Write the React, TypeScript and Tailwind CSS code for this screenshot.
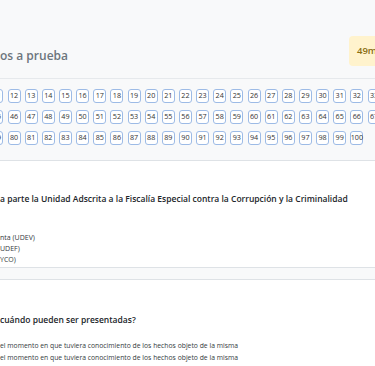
import type { ReactElement } from 'react';

const numbers = Array.from({ length: 100 }, (_, i) => i + 1);

function NumberBox({ n }: { n: number }): ReactElement {
  return (
    <span className="flex h-[14px] w-[13px] shrink-0 items-center justify-center rounded-[3px] border border-[#9dbbe6] bg-white text-[7.2px] leading-none text-[#333]">
      {n}
    </span>
  );
}

export default function App(): ReactElement {
  return (
    <div className="h-[366px] w-[375px] overflow-hidden bg-[#f8f9fa] font-['Open_Sans',sans-serif]">
      {/* header */}
      <div className="flex h-[79px] items-start justify-between border-b border-[#e6e9ec] pt-[36px]">
        <h1 className="mt-[5px] flex h-[30px] items-center text-[12px] font-semibold text-[#6c757d]">os a prueba</h1>
        <div className="-mr-[20px] flex h-[30px] w-[46px] shrink-0 items-center rounded-[4px] bg-[#fff3cd] pl-[8px] text-[9.5px] font-semibold whitespace-nowrap text-[#8a6d12]">
          49min
        </div>
      </div>

      {/* question navigator */}
      <div className="h-[82px] border-b border-[#dee2e6] pt-[10px]">
        <div className="-ml-[181px] flex w-[585px] flex-wrap gap-x-[4.15px] gap-y-[7px]">
          {numbers.map((n) => (
            <NumberBox key={n} n={n} />
          ))}
        </div>
      </div>

      {/* question 1 */}
      <div className="h-[107px] border-b border-[#dee2e6] bg-white pt-[32px]">
        <p className="text-[8.5px] font-semibold leading-[12px] text-[#212529]">
          a parte la Unidad Adscrita a la Fiscalía Especial contra la Corrupción y la Criminalidad
        </p>
        <ul className="mt-[27px] text-[7px] leading-[11px] text-[#343a40]">
          <li>nta (UDEV)</li>
          <li>UDEF)</li>
          <li>YCO)</li>
        </ul>
      </div>

      <div className="h-[11px]" />

      {/* question 2 */}
      <div className="border-t border-[#dee2e6] bg-white pb-[20px] pt-[34px]">
        <p className="text-[8.5px] font-semibold leading-[12px] text-[#212529]">cuándo pueden ser presentadas?</p>
        <ul className="mt-[14px] text-[6.8px] leading-[12px] text-[#343a40]">
          <li>el momento en que tuviera conocimiento de los hechos objeto de la misma</li>
          <li>el momento en que tuviera conocimiento de los hechos objeto de la misma</li>
        </ul>
      </div>
    </div>
  );
}
